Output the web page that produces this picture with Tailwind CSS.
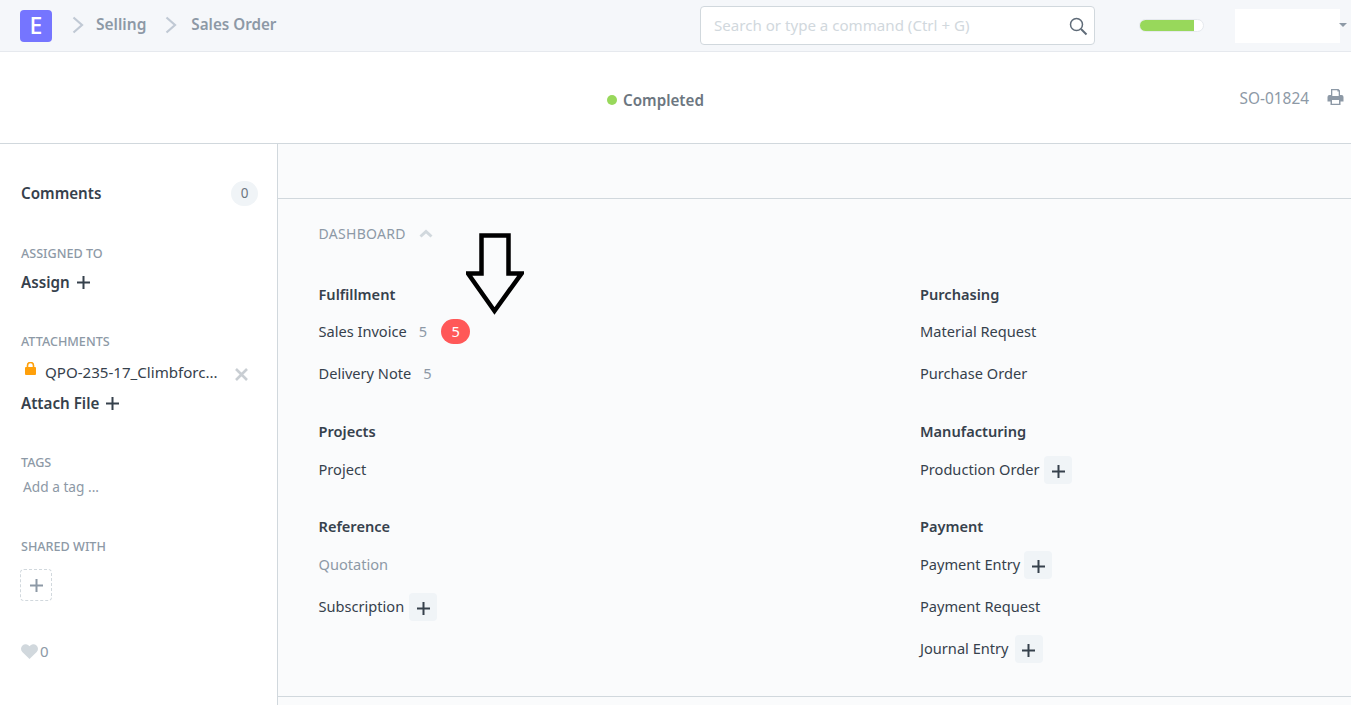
<!DOCTYPE html>
<html lang="en">
<head>
    <meta charset="UTF-8">
    <title>Sales Order</title>
    <script src="https://cdn.jsdelivr.net/npm/@tailwindcss/browser@4"></script>
</head>
<body class="bg-white font-['Noto_Sans',sans-serif] text-[14.6px] text-[#36414c] h-[705px] overflow-hidden">
    <!-- navbar -->
    <header class="h-[52px] bg-[#f5f7fa] border-b border-[#e6e9ee] flex items-center pl-5 pr-1">
        <div class="w-8 h-8 rounded-[4px] bg-[#7575ff] text-white flex items-center justify-center text-[23px] font-medium leading-none">E</div>
        <svg class="ml-5 mt-[-2px]" width="12" height="18" viewBox="0 0 12 18" fill="none" stroke="#c0c9d4" stroke-width="2.2"><path d="M1.5 1.5 10 9l-8.500 7.500"/></svg>
        <span class="ml-[12px] mt-[-2px] font-semibold text-[#8d99a6] text-[15.5px]">Selling</span>
        <svg class="ml-[19px] mt-[-2px]" width="12" height="18" viewBox="0 0 12 18" fill="none" stroke="#c0c9d4" stroke-width="2.2"><path d="M1.5 1.5 10 9l-8.500 7.500"/></svg>
        <span class="ml-[14px] mt-[-2px] font-semibold text-[#8d99a6] text-[15.2px]">Sales Order</span>
        <div class="ml-auto w-[395px] h-[39px] bg-white border border-[#d1d8dd] rounded-[4px] flex items-center justify-between pl-[13px] pr-[6px]">
            <span class="text-[#d1d8dd] text-[15.1px]">Search or type a command (Ctrl + G)</span>
            <svg width="20" height="20" viewBox="0 0 20 20" fill="none" stroke="#5f6b78" stroke-width="1.5"><circle cx="8.500" cy="8.500" r="6"/><path d="m13 13 5.500 5.500" stroke-width="2"/></svg>
        </div>
        <div class="ml-[44px] w-[65px] h-[13px] rounded-full bg-white border border-[#e6e9ee] overflow-hidden">
            <div class="w-[85%] h-full bg-[#98d85b]"></div>
        </div>
        <div class="ml-[31px] w-[105px] h-[34px] bg-white"></div>
        <div class="mt-[-2px] border-x-[4px] border-x-transparent border-t-[4px] border-t-[#8d99a6] ml-[-1px]"></div>
    </header>

    <!-- page head -->
    <div class="h-[92px] border-b border-[#d1d8dd] flex items-center pr-[7px]">
        <div class="ml-[607px] flex items-center gap-[6px] mt-[6px]">
            <span class="w-[10px] h-[10px] rounded-full bg-[#98d85b]"></span>
            <span class="font-semibold text-[#6c7680] text-[15.2px]">Completed</span>
        </div>
        <span class="ml-auto text-[#8d99a6] text-[15.4px] mt-[3px]">SO-01824</span>
        <svg class="ml-[18px] mt-[-2px]" width="17" height="16" viewBox="0 0 17 16" fill="#8d99a6"><path d="M4 0h7.500L13 1.500V6h1.500A2 2 0 0 1 16.500 8v4.500h-3V16h-10v-3.500h-3V8a2 2 0 0 1 2-2H4zM5.300 1.300V7h6.400V2.500h-1.300V1.300zM5 11v3.700h7V11z" fill-rule="evenodd"/></svg>
    </div>

    <div class="flex h-[561px]">
        <!-- sidebar -->
        <aside class="w-[278px] shrink-0 border-r border-[#d1d8dd] pl-[21px] pr-[19px] pt-[37px]">
            <div class="flex items-center justify-between h-[25px]">
                <span class="font-semibold text-[15.2px] text-[#36414c]">Comments</span>
                <span class="w-[27px] h-[25px] rounded-full bg-[#f0f4f7] text-[#6c7680] text-[13.500px] flex items-center justify-center">0</span>
            </div>

            <div class="mt-[40px] text-[12.6px] font-medium text-[#8d99a6] leading-[16px]">ASSIGNED TO</div>
            <div class="mt-[9px] flex items-center gap-[7px] font-semibold text-[15.2px] h-[22px]">
                <span>Assign</span>
                <svg width="13" height="13" viewBox="0 0 13 13" stroke="#36414c" stroke-width="2"><path d="M6.500 0v13M0 6.500h13"/></svg>
            </div>

            <div class="mt-[41px] text-[12.6px] font-medium text-[#8d99a6] leading-[16px]">ATTACHMENTS</div>
            <div class="mt-[11px] flex items-start h-[32px]">
                <svg class="ml-[4px] mt-[1px]" width="11" height="13" viewBox="0 0 11 13"><path d="M2.500 5.500V3.500a3 3 0 0 1 6 0v2" fill="none" stroke="#ffa00a" stroke-width="1.600"/><rect y="5" width="11" height="8" rx="1" fill="#ffa00a"/></svg>
                <span class="ml-[9px] w-[176px] shrink-0 whitespace-nowrap text-[15.1px] text-[#36414c]">QPO-235-17_Climbforc...</span>
                <svg class="ml-[14px] mt-[7px]" width="13" height="13" viewBox="0 0 13 13" stroke="#c9ced3" stroke-width="2.600"><path d="m1 1 11 11M12 1 1 12"/></svg>
            </div>
            <div class="mt-[-1px] flex items-center gap-[7px] font-semibold text-[15.2px] h-[22px]">
                <span>Attach File</span>
                <svg width="13" height="13" viewBox="0 0 13 13" stroke="#36414c" stroke-width="2"><path d="M6.500 0v13M0 6.500h13"/></svg>
            </div>

            <div class="mt-[41px] text-[12.6px] font-medium text-[#8d99a6] leading-[16px]">TAGS</div>
            <div class="mt-[4px] ml-[2px] text-[13.7px] text-[#8d99a6] leading-[24px]">Add a tag ...</div>

            <div class="mt-[40px] text-[12.6px] font-medium text-[#8d99a6] leading-[16px]">SHARED WITH</div>
            <div class="mt-[14px] ml-[-1px] w-[32px] h-[32px] rounded-[4px] border border-dashed border-[#d1d8dd] flex items-center justify-center">
                <svg width="13" height="13" viewBox="0 0 13 13" stroke="#8d99a6" stroke-width="2"><path d="M6.500 0v13M0 6.500h13"/></svg>
            </div>

            <div class="mt-[39px] flex items-center gap-[2px] text-[#8d99a6] text-[15px] h-[22px]">
                <svg width="17" height="15" viewBox="0 0 17 15" fill="#d1d8dd"><path d="M8.500 15 1.300 8A4.500 4.500 0 0 1 1.500 1.500a4.600 4.600 0 0 1 7 .8 4.600 4.600 0 0 1 7-.8A4.500 4.500 0 0 1 15.700 8z"/></svg>
                <span>0</span>
            </div>
        </aside>

        <!-- main -->
        <main class="flex-1 bg-[#fafbfc] relative">
            <div class="h-[55px] border-b border-[#d1d8dd]"></div>
            <div class="h-[498px] border-b border-[#d1d8dd] pl-[40.5px] pt-[24px]">
                <div class="flex items-center gap-[13px] h-[20px] text-[#8d99a6] text-[14px] tracking-[0.3px]">
                    <span>DASHBOARD</span>
                    <svg width="14" height="9" viewBox="0 0 14 9" fill="none" stroke="#d1d8dd" stroke-width="3"><path d="m1.500 7.500 5.500-5 5.500 5"/></svg>
                </div>
                <div class="grid grid-cols-[601.500px_1fr] mt-[41px]">
                    <div>
                        <div class="font-semibold h-[21px] leading-[21px]">Fulfillment</div>
                        <div class="mt-[16px] h-[42px] flex items-start">
                            <span class="leading-[21px]">Sales Invoice</span>
                            <span class="ml-[12px] text-[#8d99a6] leading-[21px]">5</span>
                            <span class="ml-[14px] mt-[-2px] w-[29px] h-[25px] rounded-full bg-[#ff5858] text-white flex items-center justify-center">5</span>
                        </div>
                        <div class="h-[42px] flex items-start">
                            <span class="leading-[21px]">Delivery Note</span>
                            <span class="ml-[12px] text-[#8d99a6] leading-[21px]">5</span>
                        </div>
                        <div class="mt-[16px] font-semibold h-[21px] leading-[21px]">Projects</div>
                        <div class="mt-[17px] h-[42px] leading-[21px]">Project</div>
                        <div class="mt-[15px] font-semibold h-[21px] leading-[21px]">Reference</div>
                        <div class="mt-[17px] h-[42px] leading-[21px] text-[#8d99a6]">Quotation</div>
                        <div class="h-[42px] flex items-start gap-[5px]">
                            <span class="leading-[21px]">Subscription</span>
                            <span class="mt-[-3px] w-[28px] h-[28px] rounded-[4px] bg-[#f0f4f7] flex items-center justify-center"><svg class="mt-[3px]" width="13" height="13" viewBox="0 0 13 13" stroke="#36414c" stroke-width="2"><path d="M6.500 0v13M0 6.500h13"/></svg></span>
                        </div>
                    </div>
                    <div>
                        <div class="font-semibold h-[21px] leading-[21px]">Purchasing</div>
                        <div class="mt-[16px] h-[42px] leading-[21px]">Material Request</div>
                        <div class="h-[42px] leading-[21px]">Purchase Order</div>
                        <div class="mt-[16px] font-semibold h-[21px] leading-[21px]">Manufacturing</div>
                        <div class="mt-[17px] h-[42px] flex items-start gap-[5px]">
                            <span class="leading-[21px]">Production Order</span>
                            <span class="mt-[-3px] w-[28px] h-[28px] rounded-[4px] bg-[#f0f4f7] flex items-center justify-center"><svg class="mt-[3px]" width="13" height="13" viewBox="0 0 13 13" stroke="#36414c" stroke-width="2"><path d="M6.500 0v13M0 6.500h13"/></svg></span>
                        </div>
                        <div class="mt-[15px] font-semibold h-[21px] leading-[21px]">Payment</div>
                        <div class="mt-[17px] h-[42px] flex items-start gap-[4px]">
                            <span class="leading-[21px]">Payment Entry</span>
                            <span class="mt-[-3px] w-[28px] h-[28px] rounded-[4px] bg-[#f0f4f7] flex items-center justify-center"><svg class="mt-[3px]" width="13" height="13" viewBox="0 0 13 13" stroke="#36414c" stroke-width="2"><path d="M6.500 0v13M0 6.500h13"/></svg></span>
                        </div>
                        <div class="h-[42px] leading-[21px]">Payment Request</div>
                        <div class="h-[42px] flex items-start gap-[6px]">
                            <span class="leading-[21px]">Journal Entry</span>
                            <span class="mt-[-3px] w-[28px] h-[28px] rounded-[4px] bg-[#f0f4f7] flex items-center justify-center"><svg class="mt-[3px]" width="13" height="13" viewBox="0 0 13 13" stroke="#36414c" stroke-width="2"><path d="M6.500 0v13M0 6.500h13"/></svg></span>
                        </div>
                    </div>
                </div>
            </div>
            <!-- annotation arrow drawn over the screenshot -->
            <svg class="absolute left-[188px] top-[89px]" width="58" height="82" viewBox="0 0 58 82" fill="none" stroke="#000" stroke-width="4.500"><path d="M15.500 2.500h27v38h13L28.500 78 2 40.500h13.500z"/></svg>
        </main>
    </div>
</body>
</html>
